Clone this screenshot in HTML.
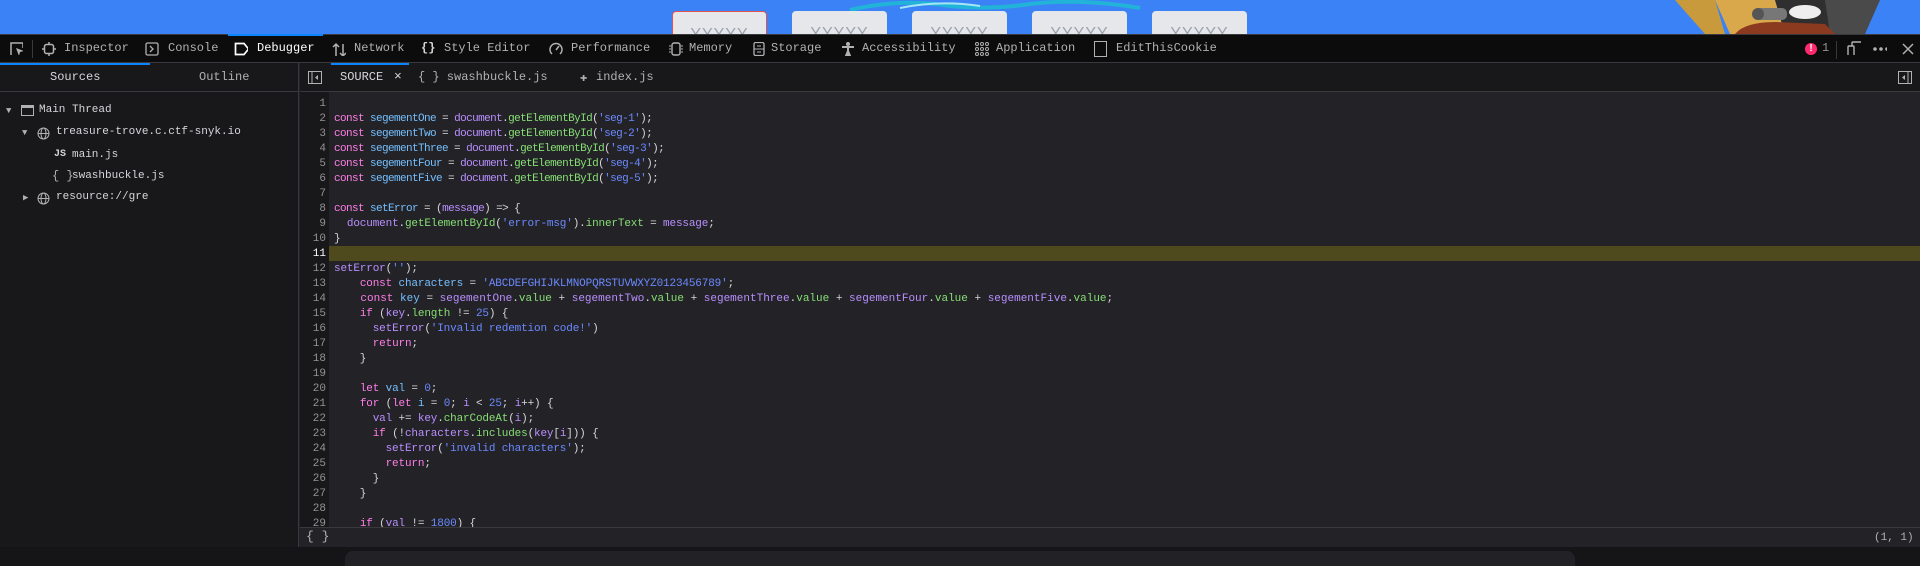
<!DOCTYPE html>
<html><head><meta charset="utf-8"><style>
*{margin:0;padding:0;box-sizing:border-box}
body{width:1920px;height:566px;overflow:hidden;background:#232327;font-family:"Liberation Mono",monospace;position:relative}
.a{position:absolute}
#top{left:0;top:0;width:1920px;height:34px;background:#3b82f6;overflow:hidden}
.inp{position:absolute;top:11px;width:95px;height:30px;background:#e5e7eb;border-radius:4px;color:#9ca3af;font:16px "Liberation Sans",sans-serif;text-align:center;padding-top:14px;letter-spacing:1px}
#tb{left:0;top:34px;width:1920px;height:29px;background:#0c0c0d;border-top:1px solid #38383d;border-bottom:1px solid #38383d}
.t{position:absolute;top:5px;color:#b1b1b3;font-size:12px;line-height:16px}
.ic{position:absolute;top:7px;width:14px;height:14px}
#left{left:0;top:63px;width:299px;height:484px;background:#18181a;border-right:1px solid #38383d}
#tabs2{left:300px;top:63px;width:1620px;height:29px;background:#18181a;border-bottom:1px solid #38383d}
.lt{position:absolute;color:#d7d7db;font-size:11px;line-height:14px}
#gut{left:300px;top:92px;width:29px;height:435px;background:#18181a}
#code{left:300px;top:97px;width:1620px;height:430px;overflow:hidden}
.ln{position:absolute;left:0;width:26px;text-align:right;color:#939395;font-size:11px;line-height:15px}
.cl{position:absolute;left:34px;white-space:pre;color:#d7d7db;font-size:11px;letter-spacing:-0.15px;line-height:15px}
.n{letter-spacing:-0.6px}
.k{color:#ff7de9}.v{color:#75bfff}.p{color:#b98eff}.m{color:#86de74}.s{color:#6b89ff}
#status{left:300px;top:527px;width:1620px;height:20px;background:#232327;border-top:1px solid #38383d}
#noise{left:0;top:547px;width:1920px;height:19px;background:#151517}
</style></head><body>
<div id="top" class="a">
<svg class="a" style="left:840px;top:0" width="330" height="12"><path d="M10 10 Q60 -2 110 6 Q150 10 190 4 Q240 -2 300 8" stroke="#22b3d8" stroke-width="4" fill="none"/><path d="M60 8 Q100 0 140 6" stroke="#a3e6f5" stroke-width="2" fill="none"/></svg>
<div class="inp" style="left:672px;border:1px solid #e35050">YYYYY</div>
<div class="inp" style="left:792px">YYYYY</div>
<div class="inp" style="left:912px">YYYYY</div>
<div class="inp" style="left:1032px">YYYYY</div>
<div class="inp" style="left:1152px">YYYYY</div>
<svg class="a" style="left:1675px;top:0" width="240" height="34">
<path d="M0 0 L40 0 L50 34 L30 34 Z" fill="#c99a3b"/>
<path d="M40 0 L100 0 L110 34 L55 34 Z" fill="#d9a84a"/>
<path d="M100 0 L150 0 L160 34 L110 34 Z" fill="#2f2f2f"/>
<path d="M150 0 L205 0 L190 34 L155 34 Z" fill="#4a4a4a"/>
<ellipse cx="130" cy="12" rx="16" ry="7" fill="#eee"/>
<rect x="80" y="8" width="32" height="12" rx="5" fill="#777"/>
<circle cx="83" cy="14" r="6" fill="#555"/>
<path d="M60 34 Q70 22 100 22 L150 24 L160 34 Z" fill="#8b3a20"/>
</svg>
</div>
<div id="tb" class="a">
<svg class="ic" style="left:9px;top:6px" width="16" height="16"><path d="M2 14 V2 H14 V7" stroke="#b1b1b3" fill="none" stroke-width="1.5"/><path d="M7 7 L15 10 L11 11 L10 15 Z" fill="#b1b1b3"/></svg>
<div class="a" style="left:32px;top:5px;width:1px;height:18px;background:#38383d"></div>
<svg class="ic" style="left:42px" width="14" height="14"><rect x="2.5" y="2.5" width="9" height="9" rx="2" stroke="#b1b1b3" fill="none" stroke-width="1.5"/><path d="M7 0V2M7 12V14M0 7H2M12 7H14" stroke="#b1b1b3" stroke-width="1.5"/></svg>
<div class="t" style="left:64px">Inspector</div>
<svg class="ic" style="left:145px" width="14" height="14"><rect x="1" y="1" width="12" height="12" rx="1.5" stroke="#b1b1b3" fill="none" stroke-width="1.3"/><path d="M5 4 L8 7 L5 10" stroke="#b1b1b3" fill="none" stroke-width="1.3"/></svg>
<div class="t" style="left:168px">Console</div>
<div class="a" style="left:228px;top:-1px;width:95px;height:2px;background:#0a84ff"></div>
<svg class="ic" style="left:234px" width="16" height="14"><path d="M1.5 1.5 H10 L14.5 7 L10 12.5 H1.5 Z" stroke="#fff" fill="none" stroke-width="1.7"/></svg>
<div class="t" style="left:257px;color:#fff">Debugger</div>
<svg class="ic" style="left:332px" width="16" height="16"><path d="M4 14V2M1 5L4 2L7 5M11 2V14M8 11L11 14L14 11" stroke="#b1b1b3" fill="none" stroke-width="1.5"/></svg>
<div class="t" style="left:354px">Network</div>
<div class="t" style="left:421px;color:#d7d7db;font-weight:bold">{}</div>
<div class="t" style="left:444px">Style Editor</div>
<svg class="ic" style="left:549px" width="14" height="14"><path d="M3 12 A6 6 0 1 1 11 12" stroke="#b1b1b3" fill="none" stroke-width="1.5"/><path d="M7 8 L10 4" stroke="#b1b1b3" stroke-width="1.5"/></svg>
<div class="t" style="left:571px">Performance</div>
<svg class="ic" style="left:669px" width="14" height="14"><rect x="3" y="1" width="8" height="12" rx="2" stroke="#b1b1b3" fill="none" stroke-width="1.4"/><path d="M0 4H2M0 7H2M0 10H2M12 4H14M12 7H14M12 10H14" stroke="#b1b1b3"/></svg>
<div class="t" style="left:689px">Memory</div>
<svg class="ic" style="left:752px" width="14" height="14"><rect x="2" y="0.5" width="10" height="13" rx="1.5" stroke="#b1b1b3" fill="none" stroke-width="1.3"/><path d="M2 7H12M5 4H9M5 10H9" stroke="#b1b1b3"/></svg>
<div class="t" style="left:771px">Storage</div>
<svg class="ic" style="left:841px" width="14" height="16"><circle cx="7" cy="2" r="2" fill="#b1b1b3"/><path d="M1 5H13M7 5V15M4.5 15 L7 9 L9.5 15" stroke="#b1b1b3" fill="none" stroke-width="2"/></svg>
<div class="t" style="left:862px">Accessibility</div>
<svg class="ic" style="left:975px" width="14" height="14"><g fill="none" stroke="#b1b1b3"><circle cx="2" cy="2" r="1.5"/><circle cx="7" cy="2" r="1.5"/><circle cx="12" cy="2" r="1.5"/><circle cx="2" cy="7" r="1.5"/><circle cx="7" cy="7" r="1.5"/><circle cx="12" cy="7" r="1.5"/><circle cx="2" cy="12" r="1.5"/><circle cx="7" cy="12" r="1.5"/><circle cx="12" cy="12" r="1.5"/></g></svg>
<div class="t" style="left:996px">Application</div>
<div class="a" style="left:1094px;top:6px;width:13px;height:16px;border:1px solid #b1b1b3"></div>
<div class="t" style="left:1116px">EditThisCookie</div>
<div class="a" style="left:1805px;top:8px;width:12px;height:12px;border-radius:50%;background:#ff2a6d;color:#fff;font:bold 10px 'Liberation Sans';text-align:center;line-height:12px">!</div>
<div class="t" style="left:1822px;color:#939395">1</div>
<div class="a" style="left:1836px;top:6px;width:1px;height:18px;background:#38383d"></div>
<svg class="ic" style="left:1847px;top:6px" width="16" height="16"><rect x="5" y="1" width="10" height="14" rx="1" stroke="#b1b1b3" fill="none" stroke-width="1.4"/><rect x="1" y="5" width="6" height="10" rx="1" stroke="#b1b1b3" fill="#0c0c0d" stroke-width="1.4"/></svg>
<svg class="ic" style="left:1873px;top:12px" width="16" height="5"><circle cx="2" cy="2" r="1.8" fill="#b1b1b3"/><circle cx="8" cy="2" r="1.8" fill="#b1b1b3"/><circle cx="14" cy="2" r="1.8" fill="#b1b1b3"/></svg>
<svg class="ic" style="left:1902px;top:8px" width="12" height="12"><path d="M1 1L11 11M11 1L1 11" stroke="#b1b1b3" stroke-width="1.5"/></svg>
</div>
<div id="left" class="a">
<div class="a" style="left:0;top:0;width:150px;height:2px;background:#0a84ff"></div>
<div class="lt" style="left:50px;top:7px;font-size:12px">Sources</div>
<div class="lt" style="left:199px;top:7px;font-size:12px;color:#b1b1b3">Outline</div>
<div class="a" style="left:0;top:28px;width:299px;height:1px;background:#38383d"></div>
<div class="lt" style="left:6px;top:41px;font-size:9px;color:#b1b1b3">▼</div>
<div class="a" style="left:21px;top:42px;width:13px;height:11px;border:1px solid #b1b1b3;border-top-width:3px"></div>
<div class="lt" style="left:39px;top:40px">Main Thread</div>
<div class="lt" style="left:22px;top:63px;font-size:9px;color:#b1b1b3">▼</div>
<svg class="a" style="left:37px;top:64px" width="13" height="13"><g stroke="#b1b1b3" fill="none"><circle cx="6.5" cy="6.5" r="5.5"/><ellipse cx="6.5" cy="6.5" rx="2.5" ry="5.5"/><path d="M1 6.5H12"/></g></svg>
<div class="lt" style="left:56px;top:62px">treasure-trove.c.ctf-snyk.io</div>
<div class="lt" style="left:54px;top:85px;font-size:10px;font-weight:bold">JS</div>
<div class="lt" style="left:72px;top:85px">main.js</div>
<div class="lt" style="left:52px;top:106px;color:#b1b1b3;font-size:12px">{ }</div>
<div class="lt" style="left:72px;top:106px">swashbuckle.js</div>
<div class="lt" style="left:23px;top:128px;font-size:9px;color:#b1b1b3">▶</div>
<svg class="a" style="left:37px;top:129px" width="13" height="13"><g stroke="#b1b1b3" fill="none"><circle cx="6.5" cy="6.5" r="5.5"/><ellipse cx="6.5" cy="6.5" rx="2.5" ry="5.5"/><path d="M1 6.5H12"/></g></svg>
<div class="lt" style="left:56px;top:127px">resource://gre</div>
</div>
<div id="tabs2" class="a">
<svg class="a" style="left:8px;top:8px" width="14" height="13"><rect x="0.5" y="0.5" width="13" height="12" stroke="#b1b1b3" fill="none"/><path d="M4 1V12" stroke="#b1b1b3"/><path d="M10 4L7 6.5L10 9Z" fill="#b1b1b3"/></svg>
<div class="a" style="left:31px;top:0;width:78px;height:2px;background:#0a84ff"></div>
<div class="lt" style="left:40px;top:7px;font-size:12px">SOURCE</div>
<div class="lt" style="left:94px;top:7px;font-size:13px">×</div>
<div class="lt" style="left:118px;top:7px;font-size:12px;color:#b1b1b3">{ } swashbuckle.js</div>
<div class="lt" style="left:280px;top:8px;color:#b1b1b3;font-size:12px">✚</div>
<div class="lt" style="left:296px;top:7px;font-size:12px;color:#b1b1b3">index.js</div>
<svg class="a" style="left:1598px;top:8px" width="14" height="13"><rect x="0.5" y="0.5" width="13" height="12" stroke="#b1b1b3" fill="none"/><path d="M10 1V12" stroke="#b1b1b3"/><path d="M7 4L4 6.5L7 9Z" fill="#b1b1b3"/></svg>
</div>
<div id="gut" class="a"></div>
<div class="a" style="left:329px;top:246px;width:1591px;height:15px;background:#4e4a1e"></div>
<div id="code" class="a">
<div class="ln" style="top:0">1</div><div class="ln" style="top:15px">2</div><div class="ln" style="top:30px">3</div><div class="ln" style="top:45px">4</div><div class="ln" style="top:60px">5</div><div class="ln" style="top:75px">6</div><div class="ln" style="top:90px">7</div><div class="ln" style="top:105px">8</div><div class="ln" style="top:120px">9</div><div class="ln" style="top:135px">10</div><div class="ln" style="top:150px;color:#fff">11</div><div class="ln" style="top:165px">12</div><div class="ln" style="top:180px">13</div><div class="ln" style="top:195px">14</div><div class="ln" style="top:210px">15</div><div class="ln" style="top:225px">16</div><div class="ln" style="top:240px">17</div><div class="ln" style="top:255px">18</div><div class="ln" style="top:270px">19</div><div class="ln" style="top:285px">20</div><div class="ln" style="top:300px">21</div><div class="ln" style="top:315px">22</div><div class="ln" style="top:330px">23</div><div class="ln" style="top:345px">24</div><div class="ln" style="top:360px">25</div><div class="ln" style="top:375px">26</div><div class="ln" style="top:390px">27</div><div class="ln" style="top:405px">28</div><div class="ln" style="top:420px">29</div>
<div class="cl n" style="top:15px"><span class="k">const</span> <span class="v">segementOne</span> = <span class="p">document</span>.<span class="m">getElementById</span>(<span class="s">'seg-1'</span>);</div>
<div class="cl n" style="top:30px"><span class="k">const</span> <span class="v">segementTwo</span> = <span class="p">document</span>.<span class="m">getElementById</span>(<span class="s">'seg-2'</span>);</div>
<div class="cl n" style="top:45px"><span class="k">const</span> <span class="v">segementThree</span> = <span class="p">document</span>.<span class="m">getElementById</span>(<span class="s">'seg-3'</span>);</div>
<div class="cl n" style="top:60px"><span class="k">const</span> <span class="v">segementFour</span> = <span class="p">document</span>.<span class="m">getElementById</span>(<span class="s">'seg-4'</span>);</div>
<div class="cl n" style="top:75px"><span class="k">const</span> <span class="v">segementFive</span> = <span class="p">document</span>.<span class="m">getElementById</span>(<span class="s">'seg-5'</span>);</div>
<div class="cl n" style="top:105px"><span class="k">const</span> <span class="v">setError</span> = (<span class="p">message</span>) =&gt; {</div>
<div class="cl" style="top:120px">  <span class="p">document</span>.<span class="m">getElementById</span>(<span class="s">'error-msg'</span>).<span class="m">innerText</span> = <span class="p">message</span>;</div>
<div class="cl" style="top:135px">}</div>
<div class="cl" style="top:165px"><span class="p">setError</span>(<span class="s">''</span>);</div>
<div class="cl" style="top:180px">    <span class="k">const</span> <span class="v">characters</span> = <span class="s">'ABCDEFGHIJKLMNOPQRSTUVWXYZ0123456789'</span>;</div>
<div class="cl" style="top:195px;letter-spacing:0px">    <span class="k">const</span> <span class="v">key</span> = <span class="p">segementOne</span>.<span class="m">value</span> + <span class="p">segementTwo</span>.<span class="m">value</span> + <span class="p">segementThree</span>.<span class="m">value</span> + <span class="p">segementFour</span>.<span class="m">value</span> + <span class="p">segementFive</span>.<span class="m">value</span>;</div>
<div class="cl" style="top:210px">    <span class="k">if</span> (<span class="p">key</span>.<span class="m">length</span> != <span class="s">25</span>) {</div>
<div class="cl" style="top:225px">      <span class="p">setError</span>(<span class="s">'Invalid redemtion code!'</span>)</div>
<div class="cl" style="top:240px">      <span class="k">return</span>;</div>
<div class="cl" style="top:255px">    }</div>
<div class="cl" style="top:285px">    <span class="k">let</span> <span class="v">val</span> = <span class="s">0</span>;</div>
<div class="cl" style="top:300px">    <span class="k">for</span> (<span class="k">let</span> <span class="v">i</span> = <span class="s">0</span>; <span class="p">i</span> &lt; <span class="s">25</span>; <span class="p">i</span>++) {</div>
<div class="cl" style="top:315px">      <span class="p">val</span> += <span class="p">key</span>.<span class="m">charCodeAt</span>(<span class="p">i</span>);</div>
<div class="cl" style="top:330px">      <span class="k">if</span> (!<span class="p">characters</span>.<span class="m">includes</span>(<span class="p">key</span>[<span class="p">i</span>])) {</div>
<div class="cl" style="top:345px">        <span class="p">setError</span>(<span class="s">'invalid characters'</span>);</div>
<div class="cl" style="top:360px">        <span class="k">return</span>;</div>
<div class="cl" style="top:375px">      }</div>
<div class="cl" style="top:390px">    }</div>
<div class="cl" style="top:420px">    <span class="k">if</span> (<span class="p">val</span> != <span class="s">1800</span>) {</div>
</div>
<div id="status" class="a">
<div class="lt" style="left:6px;top:2px;font-size:13px;color:#b1b1b3">{ }</div>
<div class="lt" style="left:1574px;top:3px;color:#b1b1b3">(1, 1)</div>
</div>
<div id="noise" class="a"><div class="a" style="left:345px;top:4px;width:1230px;height:15px;background:#222226;border-radius:8px 8px 0 0"></div></div>
</body></html>
